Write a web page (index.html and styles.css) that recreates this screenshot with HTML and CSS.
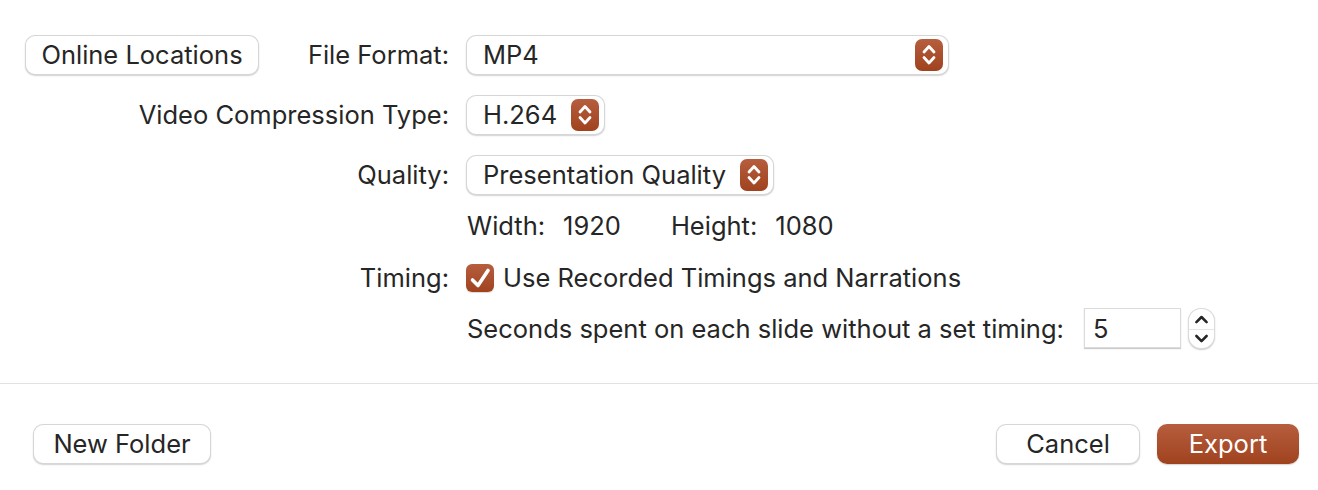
FILE: index.html
```html
<!DOCTYPE html>
<html>
<head>
<meta charset="utf-8">
<link rel="stylesheet" href="styles.css">
</head>
<body>
<div class="dialog">
  <div class="form">
    <div class="label-cell first">
      <button class="btn">Online Locations</button>
      <span class="label">File Format:</span>
    </div>
    <div class="ctl-cell">
      <div class="popup wide"><span class="popup-text">MP4</span><span class="arrows"><svg width="28" height="32" viewBox="0 0 28 32"><path d="M9 13 L14 7.5 L19 13 M9 18.5 L14 24 L19 18.5" fill="none" stroke="#fff" stroke-width="2.8" stroke-linecap="round" stroke-linejoin="round"/></svg></span></div>
    </div>

    <div class="label-cell"><span class="label">Video Compression Type:</span></div>
    <div class="ctl-cell">
      <div class="popup"><span class="popup-text">H.264</span><span class="arrows"><svg width="28" height="32" viewBox="0 0 28 32"><path d="M9 13 L14 7.5 L19 13 M9 18.5 L14 24 L19 18.5" fill="none" stroke="#fff" stroke-width="2.8" stroke-linecap="round" stroke-linejoin="round"/></svg></span></div>
    </div>

    <div class="label-cell"><span class="label">Quality:</span></div>
    <div class="ctl-cell">
      <div class="popup"><span class="popup-text">Presentation Quality</span><span class="arrows"><svg width="28" height="32" viewBox="0 0 28 32"><path d="M9 13 L14 7.5 L19 13 M9 18.5 L14 24 L19 18.5" fill="none" stroke="#fff" stroke-width="2.8" stroke-linecap="round" stroke-linejoin="round"/></svg></span></div>
    </div>

    <div class="label-cell short"></div>
    <div class="ctl-cell short dims">
      <span class="dim-label">Width:</span><span class="dim-val">1920</span>
      <span class="dim-label h">Height:</span><span class="dim-val">1080</span>
    </div>

    <div class="label-cell short"><span class="label">Timing:</span></div>
    <div class="ctl-cell short">
      <span class="checkbox"><svg width="28" height="28" viewBox="0 0 28 28"><path d="M6.5 16 L12 21.5 L22 6.5" fill="none" stroke="#fff" stroke-width="3.6" stroke-linecap="round" stroke-linejoin="round"/></svg></span>
      <span class="check-text">Use Recorded Timings and Narrations</span>
    </div>

    <div class="label-cell"></div>
    <div class="ctl-cell">
      <span class="seconds">Seconds spent on each slide without a set timing:</span>
      <span class="numfield">5</span>
      <span class="stepper">
        <svg width="27" height="41" viewBox="0 0 27 41"><path d="M8 12.5 L13.5 7 L19 12.5 M8 27.5 L13.5 33 L19 27.5" fill="none" stroke="#262626" stroke-width="2.8" stroke-linecap="round" stroke-linejoin="round"/><line x1="0" y1="20.5" x2="27" y2="20.5" stroke="#e4e4e4" stroke-width="1"/></svg>
      </span>
    </div>
  </div>

  <div class="separator"></div>

  <div class="footer">
    <button class="btn footer-btn">New Folder</button>
    <div class="footer-right">
      <button class="btn footer-btn cancel">Cancel</button>
      <button class="btn footer-btn primary">Export</button>
    </div>
  </div>
</div>
</body>
</html>
```

FILE: styles.css
```css
html, body {
  margin: 0;
  padding: 0;
  background: #ffffff;
}
body {
  font-family: "Inter", "Noto Sans", sans-serif;
  font-size: 25.5px;
  color: #262626;
  width: 1318px;
  height: 490px;
  overflow: hidden;
}
.dialog {
  padding-top: 35px;
}
.form {
  display: grid;
  grid-template-columns: 449px 1fr;
  column-gap: 17px;
  grid-template-rows: 60px 60px 55px 52px 46px 40px;
}
.label-cell {
  display: flex;
  justify-content: flex-end;
  align-items: center;
  height: 39px;
}
.label-cell.first {
  justify-content: space-between;
  padding-left: 25px;
}
.label-cell.short, .ctl-cell.short {
  height: 31px;
}
.ctl-cell {
  display: flex;
  align-items: center;
  height: 40px;
}
.label {
  white-space: nowrap;
}
.btn {
  font-family: inherit;
  font-size: 25.5px;
  color: #262626;
  background: #fff;
  border: 0.5px solid rgba(0,0,0,0.16);
  border-radius: 10px;
  box-shadow: 0 1px 1.5px rgba(0,0,0,0.18);
  height: 40px;
  padding: 0 0 1px;
  display: inline-flex;
  align-items: center;
  justify-content: center;
  white-space: nowrap;
}
.first .btn {
  width: 234px;
  align-self: flex-start;
}
.popup {
  display: flex;
  align-items: center;
  height: 40px;
  box-sizing: border-box;
  background: #fff;
  border: 0.5px solid rgba(0,0,0,0.16);
  border-radius: 10px;
  box-shadow: 0 1px 1.5px rgba(0,0,0,0.18);
  padding-left: 16px;
  padding-right: 5px;
}
.popup-text {
  margin-right: 14px;
  margin-top: -1px;
  white-space: nowrap;
}
.popup.wide {
  width: 483px;
  justify-content: space-between;
}
.arrows {
  width: 28px;
  height: 32px;
  border-radius: 7px;
  background: linear-gradient(#b65e3e, #a0421e);
  display: flex;
}
.dims {
  padding-left: 1px;
}
.dim-label {
  margin-right: 18px;
}
.dim-label.h {
  margin-left: 50px;
}
.checkbox {
  width: 28px;
  height: 28px;
  border-radius: 6px;
  background: linear-gradient(#b65e3e, #a0421e);
  display: flex;
  box-shadow: 0 1px 1px rgba(0,0,0,0.15);
}
.check-text {
  margin-left: 9px;
}
.seconds {
  padding-left: 1px;
  width: 617px;
  white-space: nowrap;
}
.numfield {
  width: 97px;
  height: 40px;
  box-sizing: border-box;
  border: 0.5px solid rgba(0,0,0,0.14);
  box-shadow: 0 1px 1px rgba(0,0,0,0.2);
  padding-left: 8px;
  display: flex;
  align-items: center;
  background: #fff;
}
.stepper {
  margin-left: 7px;
  width: 27px;
  height: 41px;
  border-radius: 13px;
  background: #fff;
  border: 0.5px solid rgba(0,0,0,0.14);
  box-shadow: 0 1px 1.5px rgba(0,0,0,0.2);
  display: flex;
  box-sizing: border-box;
  overflow: hidden;
}
.separator {
  margin-top: 35px;
  height: 1px;
  background: #e2e2e2;
}
.footer {
  display: flex;
  justify-content: space-between;
  padding: 40px 19px 0 33px;
}
.footer-right {
  display: flex;
  gap: 17px;
}
.footer-btn {
  width: 178px;
}
.cancel {
  width: 144px;
}
.primary {
  width: 142px;
  color: #fff;
  border: none;
  background: linear-gradient(#b65e3e, #a0421e);
}
```
